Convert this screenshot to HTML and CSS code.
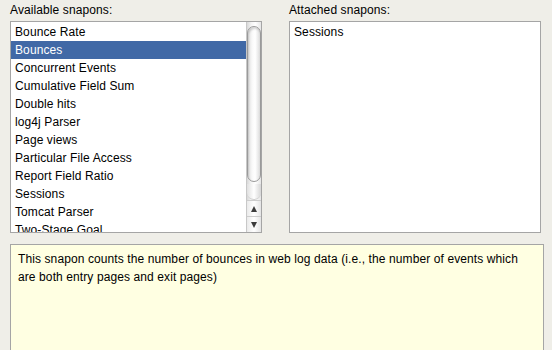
FILE: index.html
```html
<!DOCTYPE html>
<html lang="en">
<head>
  <meta charset="UTF-8">
  <title>Snapons</title>
  <link rel="stylesheet" href="styles.css">
</head>
<body>
  <div class="panel">
    <div class="columns">
      <div class="column">
        <div class="label">Available snapons:</div>
        <div class="listbox">
          <div class="items">
            <div class="item">Bounce Rate</div>
            <div class="item selected">Bounces</div>
            <div class="item">Concurrent Events</div>
            <div class="item">Cumulative Field Sum</div>
            <div class="item">Double hits</div>
            <div class="item">log4j Parser</div>
            <div class="item">Page views</div>
            <div class="item">Particular File Access</div>
            <div class="item">Report Field Ratio</div>
            <div class="item">Sessions</div>
            <div class="item">Tomcat Parser</div>
            <div class="item">Two-Stage Goal</div>
          </div>
          <div class="scrollbar">
            <div class="track">
              <div class="thumb"></div>
              <div class="track-end"></div>
            </div>
            <div class="arrow up"><span></span></div>
            <div class="arrow down"><span></span></div>
          </div>
        </div>
      </div>
      <div class="column">
        <div class="label">Attached snapons:</div>
        <div class="listbox">
          <div class="items">
            <div class="item">Sessions</div>
          </div>
        </div>
      </div>
    </div>
    <div class="description">
      This snapon counts the number of bounces in web log data (i.e., the number of events which are both entry pages and exit pages)
    </div>
  </div>
</body>
</html>
```

FILE: styles.css
```css
* {
  box-sizing: border-box;
  margin: 0;
  padding: 0;
}

body {
  background: #efeee8;
  font-family: 'Liberation Sans', Arial, sans-serif;
  font-size: 12px;
  letter-spacing: 0.1px;
  color: #000;
  overflow: hidden;
}

.panel {
  padding: 3px 8px 0 10px;
}

.columns {
  display: flex;
  gap: 27px;
}

.column {
  width: 252px;
}

.label {
  height: 18px;
  line-height: 15px;
}

.listbox {
  display: flex;
  height: 212px;
  background: #fff;
  border: 1px solid #a5a5a5;
  overflow: hidden;
}

.items {
  flex: 1;
  padding-top: 1px;
  overflow: hidden;
}

.item {
  height: 18px;
  line-height: 18px;
  padding-left: 4px;
  white-space: nowrap;
}

.item.selected {
  background: #4169a6;
  color: #fff;
}

.scrollbar {
  width: 15px;
  display: flex;
  flex-direction: column;
  border-left: 1px solid #c8c8c8;
  background: linear-gradient(to right, #d8d8d8, #f4f4f4 30%, #fff 60%, #e6e6e6);
}

.track {
  flex: 1;
  display: flex;
  flex-direction: column;
  padding: 4px 0 0 0;
}

.thumb {
  height: 156px;
  border: 1px solid #9a9a9a;
  border-radius: 7px;
  background: linear-gradient(to right, #e4e4e4, #fbfbfb 40%, #fff 60%, #dcdcdc);
  box-shadow: inset 1px 2px 2px rgba(0,0,0,0.15);
}

.track-end {
  flex: 1;
  margin-top: 2px;
  border-radius: 0 0 7px 7px;
  background: linear-gradient(to right, #e0e0e0, #fff 50%, #d6d6d6);
  border-bottom: 1px solid #cfcfcf;
}

.arrow {
  height: 16px;
  display: flex;
  align-items: center;
  justify-content: center;
  border-top: 1px solid #cdcdcd;
  background: linear-gradient(to right, #eaeaea, #fff 50%, #e4e4e4);
}

.arrow span {
  width: 0;
  height: 0;
  border-left: 3.5px solid transparent;
  border-right: 3.5px solid transparent;
}

.arrow.up span {
  border-bottom: 6px solid #3c3c3c;
}

.arrow.down span {
  border-top: 6px solid #3c3c3c;
}

.description {
  margin-top: 11px;
  width: 534px;
  height: 120px;
  background: #ffffe2;
  border: 1px solid #a5a5a5;
  padding: 5px 20px 0 7px;
  line-height: 18px;
}
```
